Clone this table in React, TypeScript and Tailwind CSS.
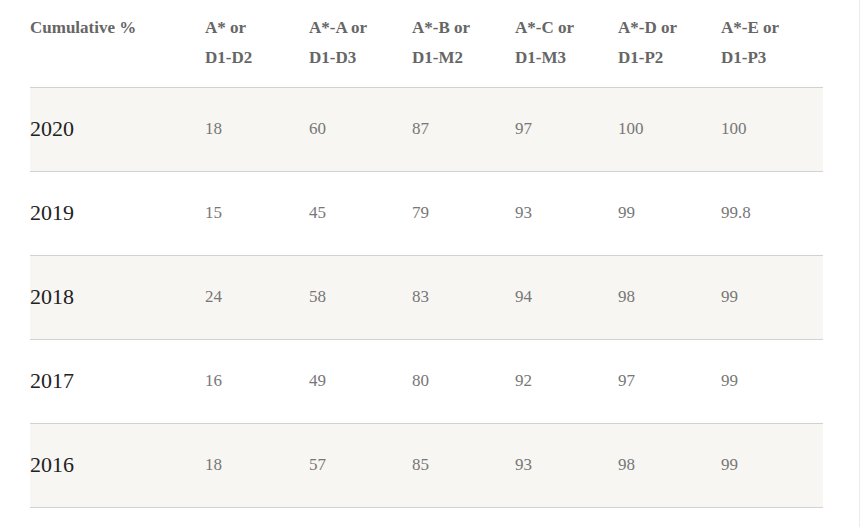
import React from "react";

const headers = [
  ["A* or", "D1-D2"],
  ["A*-A or", "D1-D3"],
  ["A*-B or", "D1-M2"],
  ["A*-C or", "D1-M3"],
  ["A*-D or", "D1-P2"],
  ["A*-E or", "D1-P3"],
];

const rows: [string, string[]][] = [
  ["2020", ["18", "60", "87", "97", "100", "100"]],
  ["2019", ["15", "45", "79", "93", "99", "99.8"]],
  ["2018", ["24", "58", "83", "94", "98", "99"]],
  ["2017", ["16", "49", "80", "92", "97", "99"]],
  ["2016", ["18", "57", "85", "93", "98", "99"]],
];

const widths = ["w-[175px]", "w-[104px]", "w-[103px]", "w-[103px]", "w-[103px]", "w-[103px]", "w-[102px]"];

export default function App() {
  return (
    <div
      className="w-[860px] h-[527px] bg-white border-r border-[#ececec] overflow-hidden"
      style={{ fontFamily: '"Liberation Serif", "Times New Roman", serif' }}
    >
      <div className="pl-[30px] w-[823px]">
        <div className="flex border-b border-[#d2d2d2] pt-[13px] pb-[14px]">
          <div className={`${widths[0]} text-[17px] leading-[30px] font-bold text-[#666]`}>Cumulative %</div>
          {headers.map((h, i) => (
            <div key={i} className={`${widths[i + 1]} text-[17px] leading-[30px] font-bold text-[#666]`}>
              <div>{h[0]}</div>
              <div>{h[1]}</div>
            </div>
          ))}
        </div>
        {rows.map(([year, vals], r) => (
          <div
            key={year}
            className={`flex items-center h-[84px] pb-[2px] border-b border-[#d2d2d2] ${r % 2 === 0 ? "bg-[#f7f6f2]" : "bg-white"}`}
          >
            <div className={`${widths[0]} text-[22px] text-[#222]`}>{year}</div>
            {vals.map((v, i) => (
              <div key={i} className={`${widths[i + 1]} text-[17px] text-[#777]`}>
                {v}
              </div>
            ))}
          </div>
        ))}
      </div>
    </div>
  );
}
